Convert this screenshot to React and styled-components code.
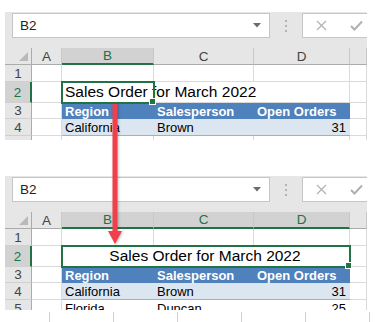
import React from 'react';
import styled, { createGlobalStyle } from 'styled-components';

const GlobalStyle = createGlobalStyle`
  html, body {
    margin: 0;
    background: #ffffff;
  }
  body {
    font-family: "Liberation Sans", Arial, sans-serif;
  }
`;

const GREEN = '#217346';
const COL_TEMPLATE = '27px 30px 92px 100px 96px 17px';
const ROW_TEMPLATE = '17px 17px 21px 16px 17px 17px';
const COLUMNS = ['A', 'B', 'C', 'D'];

const TABLE_ROWS = [
  { n: 3, kind: 'head', cells: ['Region', 'Salesperson', 'Open Orders'] },
  { n: 4, kind: 'band', cells: ['California', 'Brown', '31'] },
  { n: 5, kind: 'plain', cells: ['Florida', 'Duncan', '25'] },
];

const Page = styled.div`
  position: relative;
  width: 379px;
  height: 322px;
  overflow: hidden;
  box-sizing: border-box;
  padding: 12px 0 0 5px;
  display: flex;
  flex-direction: column;
`;

const Shot = styled.div`
  width: 362px;
  height: ${p => p.$height}px;
  margin-bottom: ${p => p.$gap || 0}px;
  overflow: hidden;
  background: #e6e6e6;
  flex-shrink: 0;
`;

const Toolbar = styled.div`
  display: flex;
  align-items: center;
  padding: 1px 0 0 7px;
  margin-bottom: 10px;
  height: 25px;
`;

const NameBox = styled.div`
  width: 258px;
  height: 25px;
  flex-shrink: 0;
  box-sizing: border-box;
  background: #ffffff;
  border: 1px solid #c6c6c6;
  display: flex;
  align-items: center;
  justify-content: space-between;
  padding: 0 8px 0 7px;
  font-size: 13.5px;
  color: #222;
`;

const Dots = styled.div`
  display: flex;
  flex-direction: column;
  flex-shrink: 0;
  gap: 3px;
  margin: 0 15px 0 15px;

  span {
    width: 2px;
    height: 2px;
    background: #b4b4b4;
  }
`;

const FormulaButtons = styled.div`
  width: 90px;
  height: 25px;
  box-sizing: border-box;
  background: #ffffff;
  border: 1px solid #c6c6c6;
  border-right: none;
  display: flex;
  align-items: center;
  gap: 23px;
  padding-left: 13px;
  flex-shrink: 0;
`;

const Sheet = styled.div`
  display: grid;
  grid-template-columns: ${COL_TEMPLATE};
  grid-template-rows: ${ROW_TEMPLATE};
  background: #ffffff;
  font-size: 13px;
`;

const Corner = styled.div`
  position: relative;
  background: #e6e6e6;
  box-sizing: border-box;
  border-right: 1px solid #ababab;
  border-bottom: 1px solid #ababab;

  &::after {
    content: '';
    position: absolute;
    right: 3px;
    bottom: 3px;
    border-left: 9px solid transparent;
    border-bottom: 9px solid #b9b9b9;
  }
`;

const ColHeader = styled.div`
  box-sizing: border-box;
  background: ${p => (p.$selected ? '#d2d2d2' : '#e6e6e6')};
  color: ${p => (p.$selected ? GREEN : '#444')};
  border-right: 1px solid #c8c8c8;
  border-bottom: ${p => (p.$selected ? `2px solid ${GREEN}` : '1px solid #ababab')};
  display: flex;
  align-items: center;
  justify-content: center;
  font-size: 13.5px;
`;

const RowHeader = styled.div`
  box-sizing: border-box;
  background: ${p => (p.$selected ? '#d2d2d2' : '#e6e6e6')};
  color: ${p => (p.$selected ? GREEN : '#444')};
  border-right: ${p => (p.$selected ? `2px solid ${GREEN}` : '1px solid #ababab')};
  border-bottom: 1px solid #d0d0d0;
  display: flex;
  align-items: center;
  justify-content: center;
  font-size: 13.5px;
`;

const variants = {
  grid: 'background: transparent; border-right: 1px solid #dadada; border-bottom: 1px solid #dadada;',
  head: 'background: #4f81bd; color: #ffffff; font-weight: bold;',
  band: 'background: #dce6f1; border-bottom: 1px solid #95b3d7;',
  plain: 'background: #ffffff; border-bottom: 1px solid #95b3d7;',
};

const Cell = styled.div`
  position: relative;
  box-sizing: border-box;
  display: flex;
  align-items: center;
  justify-content: ${p => (p.$align === 'right' ? 'flex-end' : p.$align === 'center' ? 'center' : 'flex-start')};
  padding: 0 4px 0 3px;
  white-space: nowrap;
  color: #000;
  ${p => variants[p.$variant || 'grid']}
  ${p => (p.$noRight ? 'border-right: none;' : '')}
`;

const TitleCell = styled(Cell)`
  grid-column: span ${p => p.$span || 1};
  font-size: 15.5px;
  z-index: 1;
  outline: 2px solid ${GREEN};
  outline-offset: -1px;

  &::after {
    content: '';
    position: absolute;
    right: -3px;
    bottom: -3px;
    width: 5px;
    height: 5px;
    background: ${GREEN};
    border: 1px solid #ffffff;
  }
`;

const TickStrip = styled.div`
  display: flex;
  gap: 63px;
  margin: 2px 0 0 -5px;
  padding-left: 49px;
  height: 10px;

  span {
    width: 1px;
    height: 100%;
    background: #d0d0d0;
    flex-shrink: 0;
  }
`;

const ArrowSvg = styled.svg`
  position: absolute;
  left: 108px;
  top: 102px;
  filter: drop-shadow(1px 1px 1px rgba(0, 0, 0, 0.25));
`;

const DropTriangle = () => (
  <svg width="8" height="5" viewBox="0 0 8 5">
    <polygon points="0,0 8,0 4,4.5" fill="#6b6b6b" />
  </svg>
);

const CancelIcon = () => (
  <svg width="11" height="11" viewBox="0 0 11 11">
    <path d="M1 1 L10 10 M10 1 L1 10" stroke="#b3b3b3" strokeWidth="1.3" fill="none" />
  </svg>
);

const CheckIcon = () => (
  <svg width="13" height="11" viewBox="0 0 13 11">
    <path d="M1 6 L4.5 9.5 L12 1.5" stroke="#b0b0b0" strokeWidth="2" fill="none" />
  </svg>
);

const Ribbon = () => (
  <Toolbar>
    <NameBox>
      <span>B2</span>
      <DropTriangle />
    </NameBox>
    <Dots>
      <span />
      <span />
      <span />
    </Dots>
    <FormulaButtons>
      <CancelIcon />
      <CheckIcon />
    </FormulaButtons>
  </Toolbar>
);

// rows past `filled` keep their grid but show no values (they are cut off)
const TableRows = ({ filled }) =>
  TABLE_ROWS.map((row, i) => {
    const show = i < filled;
    return (
      <React.Fragment key={row.n}>
        <RowHeader>{show ? row.n : ''}</RowHeader>
        <Cell />
        <Cell $variant={show ? row.kind : 'grid'}>{show && row.cells[0]}</Cell>
        <Cell $variant={show ? row.kind : 'grid'}>{show && row.cells[1]}</Cell>
        <Cell $variant={show ? row.kind : 'grid'} $align={row.kind === 'head' ? 'left' : 'right'}>
          {show && row.cells[2]}
        </Cell>
        <Cell />
      </React.Fragment>
    );
  });

const Spreadsheet = ({ merged, filled }) => (
  <Sheet>
    <Corner />
    {COLUMNS.map(c => (
      <ColHeader key={c} $selected={c === 'B' || (merged && c !== 'A')}>
        {c}
      </ColHeader>
    ))}
    <ColHeader />

    <RowHeader>1</RowHeader>
    <Cell />
    <Cell />
    <Cell />
    <Cell />
    <Cell />

    <RowHeader $selected>2</RowHeader>
    <Cell />
    {merged ? (
      <TitleCell $span={3} $align="center">Sales Order for March 2022</TitleCell>
    ) : (
      <>
        <TitleCell>Sales Order for March 2022</TitleCell>
        <Cell $noRight />
        <Cell />
      </>
    )}
    <Cell />

    <TableRows filled={filled} />
  </Sheet>
);

const Arrow = () => (
  <ArrowSvg width="14" height="143" viewBox="0 0 14 143">
    <rect x="4.5" y="0" width="5" height="130" fill="#f0404c" />
    <polygon points="0,129 14,129 7,142" fill="#f0404c" />
  </ArrowSvg>
);

export default function App() {
  return (
    <>
      <GlobalStyle />
      <Page>
        <Shot $height={128} $gap={36}>
          <Ribbon />
          <Spreadsheet filled={2} />
        </Shot>
        <Shot $height={134}>
          <Ribbon />
          <Spreadsheet merged filled={3} />
        </Shot>
        <TickStrip>
          {Array.from({ length: 6 }).map((_, i) => (
            <span key={i} />
          ))}
        </TickStrip>
        <Arrow />
      </Page>
    </>
  );
}
